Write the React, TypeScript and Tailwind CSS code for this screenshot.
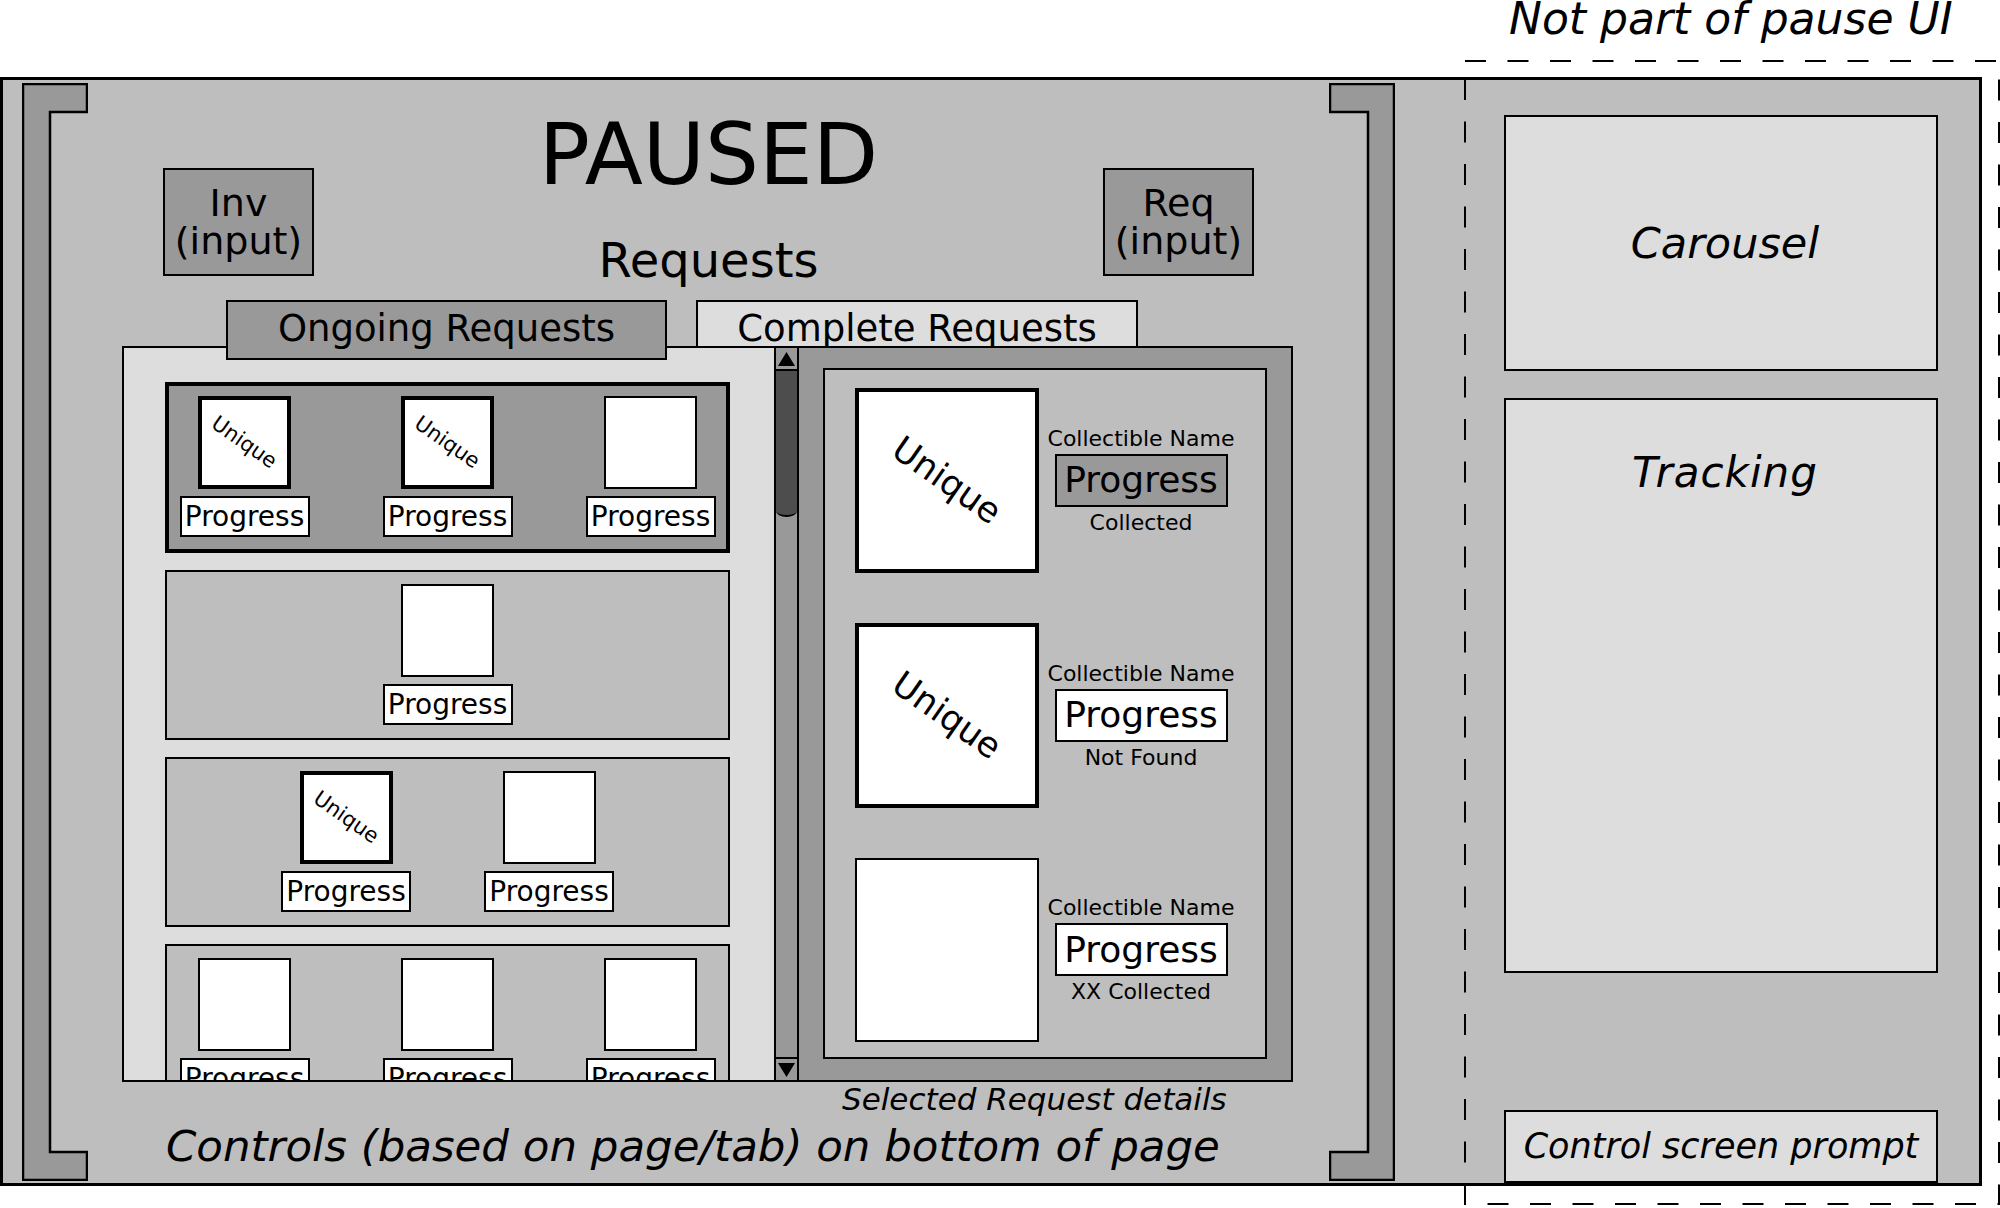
import React from 'react';

// Pause menu wireframe: requests list + selected request details

const rows = [
    { selected: true, items: [true, true, false] },
    { selected: false, items: [false] },
    { selected: false, items: [true, false] },
    { selected: false, items: [false, false, false] },
];

const details = [
    { unique: true, status: 'Collected', done: true },
    { unique: true, status: 'Not Found', done: false },
    { unique: false, status: 'XX Collected', done: false },
];

const LeftBracket = () => (
    <svg width="66" height="1098" viewBox="0 0 66 1098" className="ml-[19px] mt-[3px] shrink-0">
        <polygon
            points="1,1 65,1 65,29 28,29 28,1069 65,1069 65,1097 1,1097"
            fill="#999999"
            stroke="#000"
            strokeWidth="2.5"
        />
    </svg>
);

const RightBracket = () => (
    <svg width="66" height="1098" viewBox="0 0 66 1098" className="mt-[3px] shrink-0">
        <polygon
            points="1,1 65,1 65,1097 1,1097 1,1069 39,1069 39,29 1,29"
            fill="#999999"
            stroke="#000"
            strokeWidth="2.5"
        />
    </svg>
);

const ListItem = ({ unique }: { unique: boolean }) => (
    <div className="flex w-[130px] flex-col items-center">
        <div
            className={
                unique
                    ? 'flex h-[93px] w-[93px] items-center justify-center overflow-hidden border-4 border-black bg-white'
                    : 'flex h-[93px] w-[93px] items-center justify-center overflow-hidden border-2 border-black bg-white'
            }
        >
            {unique && <span className="rotate-[35deg] text-[21px] leading-none">Unique</span>}
        </div>
        <div className="mt-[7px] flex h-[41px] w-[130px] items-center justify-center border-2 border-black bg-white text-[28px] leading-none">
            Progress
        </div>
    </div>
);

const ScrollArrow = ({ down }: { down?: boolean }) => (
    <svg width="17" height="14" viewBox="0 0 17 14">
        <polygon points={down ? '0,0 17,0 8.5,14' : '8.5,0 17,14 0,14'} fill="#000" />
    </svg>
);

const App = () => {
    return (
        <div className="relative h-[1208px] w-[2000px] overflow-hidden bg-white font-['DejaVu_Sans','Liberation_Sans',sans-serif] text-black">
            <div className="h-[77px]">
                <div className="ml-[1509px] text-[44px] italic leading-[38px]">Not part of pause UI</div>
            </div>

            <div className="flex h-[1109px] w-[1982px] border-[3px] border-black bg-[#bebebe]">
                <LeftBracket />

                {/* pause ui */}
                <div className="flex w-[1241px] shrink-0 flex-col">
                    <div className="flex items-start px-[75px]">
                        <div className="mt-[88px] flex h-[108px] w-[151px] flex-col items-center justify-center border-2 border-black bg-[#999999] text-[38px] leading-[38px]">
                            <span>Inv</span>
                            <span>(input)</span>
                        </div>
                        <div className="flex flex-1 flex-col items-center">
                            <div className="mt-[32px] text-[85px] leading-none">PAUSED</div>
                            <div className="mt-[39px] text-[48px] leading-none">Requests</div>
                        </div>
                        <div className="mt-[88px] flex h-[108px] w-[151px] flex-col items-center justify-center border-2 border-black bg-[#999999] text-[38px] leading-[38px]">
                            <span>Req</span>
                            <span>(input)</span>
                        </div>
                    </div>

                    <div className="mt-[16px] flex h-[46px] items-start">
                        <div className="relative z-10 ml-[138px] flex h-[60px] w-[441px] justify-center border-2 border-black bg-[#999999] pt-[8px] text-[37px] leading-none">
                            Ongoing Requests
                        </div>
                        <div className="ml-[29px] flex h-[46px] w-[442px] justify-center overflow-hidden border-2 border-b-0 border-black bg-[#dddddd] pt-[8px] text-[37px] leading-none">
                            Complete Requests
                        </div>
                    </div>

                    <div className="ml-[34px] flex h-[736px]">
                        <div className="flex w-[652px] flex-col gap-[17px] overflow-hidden border-2 border-r-0 border-black bg-[#dddddd] pl-[41px] pt-[34px]">
                            {rows.map((row, i) => (
                                <div
                                    key={i}
                                    className={
                                        row.selected
                                            ? 'flex h-[171px] w-[565px] shrink-0 items-start justify-center gap-[73px] border-4 border-black bg-[#999999] pt-[10px]'
                                            : 'flex h-[170px] w-[565px] shrink-0 items-start justify-center gap-[73px] border-2 border-black bg-[#bebebe] pt-[12px]'
                                    }
                                >
                                    {row.items.map((u, j) => (
                                        <ListItem key={j} unique={u} />
                                    ))}
                                </div>
                            ))}
                        </div>

                        <div className="flex w-[25px] flex-col border-2 border-black bg-[#999999]">
                            <div className="flex h-[23px] items-center justify-center border-b-2 border-black">
                                <ScrollArrow />
                            </div>
                            <div className="h-[146px] rounded-b-[50%_6px] border-b-2 border-black bg-[#4d4d4d]" />
                            <div className="flex-1" />
                            <div className="flex h-[23px] items-center justify-center border-t-2 border-black">
                                <ScrollArrow down />
                            </div>
                        </div>

                        <div className="flex w-[494px] flex-col border-2 border-l-0 border-black bg-[#999999] px-[24px] pb-[21px] pt-[20px]">
                            <div className="flex flex-1 flex-col gap-[50px] border-2 border-black bg-[#bebebe] pl-[30px] pt-[18px]">
                                {details.map((d, i) => (
                                    <div key={i} className="flex items-center">
                                        <div
                                            className={
                                                d.unique
                                                    ? 'flex h-[185px] w-[184px] items-center justify-center overflow-hidden border-4 border-black bg-white'
                                                    : 'flex h-[184px] w-[184px] items-center justify-center overflow-hidden border-2 border-black bg-white'
                                            }
                                        >
                                            {d.unique && (
                                                <span className="rotate-[35deg] text-[35px] leading-none">Unique</span>
                                            )}
                                        </div>
                                        <div className="ml-[2px] flex w-[200px] flex-col items-center">
                                            <div className="text-[22px] leading-none">Collectible Name</div>
                                            <div
                                                className={
                                                    d.done
                                                        ? 'mt-[4px] flex h-[53px] w-[173px] items-center justify-center border-2 border-black bg-[#999999] text-[36px] leading-none'
                                                        : 'mt-[4px] flex h-[53px] w-[173px] items-center justify-center border-2 border-black bg-white text-[36px] leading-none'
                                                }
                                            >
                                                Progress
                                            </div>
                                            <div className="mt-[5px] text-[22px] leading-none">{d.status}</div>
                                        </div>
                                    </div>
                                ))}
                            </div>
                        </div>
                    </div>

                    <div className="ml-[754px] mt-[2px] text-[31px] italic leading-none">Selected Request details</div>
                    <div className="ml-[78px] mt-[10px] text-[43.5px] italic leading-none">
                        Controls (based on page/tab) on bottom of page
                    </div>
                </div>

                <RightBracket />

                {/* hud elements outside the pause ui */}
                <div className="flex flex-1 flex-col pl-[109px] pt-[35px]">
                    <div className="flex h-[256px] w-[434px] items-center justify-center border-2 border-black bg-[#dddddd] pl-[8px] text-[43px] italic leading-none">
                        Carousel
                    </div>
                    <div className="mt-[27px] flex h-[575px] w-[434px] justify-center border-2 border-black bg-[#dddddd] pl-[8px] pt-[52px] text-[42px] italic leading-none tracking-[1px]">
                        Tracking
                    </div>
                    <div className="mt-auto flex h-[73px] w-[434px] items-center justify-center border-2 border-black bg-[#dddddd] text-[35px] italic leading-none">
                        Control screen prompt
                    </div>
                </div>
            </div>

            <svg
                className="pointer-events-none absolute left-[1464px] top-[60px]"
                width="536"
                height="1148"
                viewBox="0 0 536 1148"
            >
                <rect
                    x="1"
                    y="1"
                    width="534"
                    height="1143"
                    fill="none"
                    stroke="#000"
                    strokeWidth="2"
                    strokeDasharray="21 21.5"
                />
            </svg>
        </div>
    );
};

export default App;
